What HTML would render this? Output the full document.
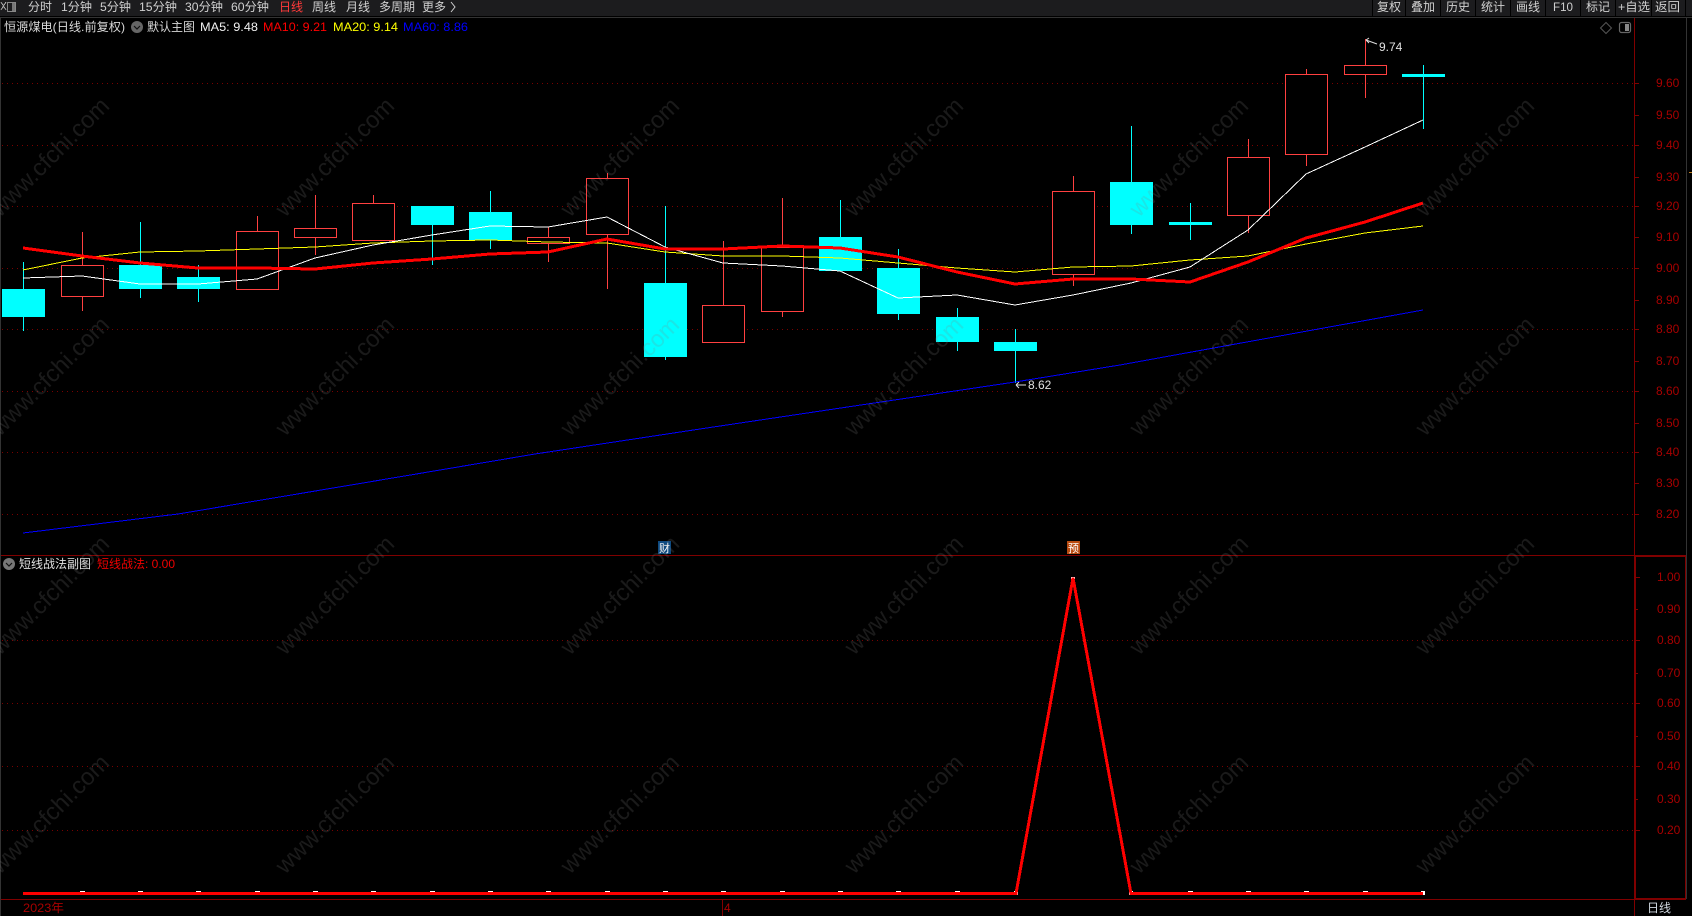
<!DOCTYPE html>
<html><head><meta charset="utf-8"><title>恒源煤电</title>
<style>
html,body{margin:0;padding:0;background:#000;width:1692px;height:916px;overflow:hidden}
svg{display:block;position:absolute;left:0;top:0}
text{font-family:"Liberation Sans","Noto Sans CJK SC",sans-serif;font-size:12px}
</style></head><body>
<svg width="1692" height="916" viewBox="0 0 1692 916" xmlns="http://www.w3.org/2000/svg">
<rect width="1692" height="916" fill="#000"/>
<!-- top bar -->
<rect x="0" y="0" width="1692" height="16" fill="#1c1c1e"/>
<rect x="0" y="16" width="1692" height="1" fill="#000"/>
<rect x="0" y="17" width="1692" height="1" fill="#333"/>
<rect x="0" y="17" width="1" height="899" fill="#333"/>
<rect x="1686" y="17" width="1" height="882" fill="#333"/>
<g fill="#000" shape-rendering="crispEdges">
<rect x="1372" y="0" width="1" height="16"/><rect x="1405" y="0" width="1" height="16"/><rect x="1440" y="0" width="1" height="16"/><rect x="1475" y="0" width="1" height="16"/><rect x="1510" y="0" width="1" height="16"/><rect x="1545" y="0" width="1" height="16"/><rect x="1580" y="0" width="1" height="16"/><rect x="1615" y="0" width="1" height="16"/><rect x="1651" y="0" width="1" height="16"/><rect x="1685" y="0" width="1" height="16"/>
</g>
<!-- logo icon -->
<g fill="none" stroke="#999" stroke-width="1" shape-rendering="crispEdges">
<rect x="7.5" y="2.5" width="8" height="9" stroke="#888"/>
<path d="M1 2 L6 10 M6 2 L1 10" stroke="#aaa"/>
</g>
<rect x="12" y="3" width="3" height="8" fill="#777"/>
<g fill="#d0d0d0">
<text x="28" y="11" textLength="24" lengthAdjust="spacingAndGlyphs">分时</text>
<text x="61" y="11" textLength="31" lengthAdjust="spacingAndGlyphs">1分钟</text>
<text x="100" y="11" textLength="31" lengthAdjust="spacingAndGlyphs">5分钟</text>
<text x="139" y="11" textLength="38" lengthAdjust="spacingAndGlyphs">15分钟</text>
<text x="185" y="11" textLength="38" lengthAdjust="spacingAndGlyphs">30分钟</text>
<text x="231" y="11" textLength="38" lengthAdjust="spacingAndGlyphs">60分钟</text>
<text x="279" y="11" textLength="24" lengthAdjust="spacingAndGlyphs" fill="#ff3a3a">日线</text>
<text x="312" y="11" textLength="24" lengthAdjust="spacingAndGlyphs">周线</text>
<text x="346" y="11" textLength="24" lengthAdjust="spacingAndGlyphs">月线</text>
<text x="379" y="11" textLength="36" lengthAdjust="spacingAndGlyphs">多周期</text>
<text x="422" y="11" textLength="24" lengthAdjust="spacingAndGlyphs">更多</text>
<text x="1377" y="11" textLength="24" lengthAdjust="spacingAndGlyphs">复权</text>
<text x="1411" y="11" textLength="24" lengthAdjust="spacingAndGlyphs">叠加</text>
<text x="1446" y="11" textLength="24" lengthAdjust="spacingAndGlyphs">历史</text>
<text x="1481" y="11" textLength="24" lengthAdjust="spacingAndGlyphs">统计</text>
<text x="1516" y="11" textLength="24" lengthAdjust="spacingAndGlyphs">画线</text>
<text x="1553" y="11" textLength="20" lengthAdjust="spacingAndGlyphs">F10</text>
<text x="1586" y="11" textLength="24" lengthAdjust="spacingAndGlyphs">标记</text>
<text x="1618" y="11" textLength="32" lengthAdjust="spacingAndGlyphs">+自选</text>
<text x="1655" y="11" textLength="25" lengthAdjust="spacingAndGlyphs">返回</text>
</g>
<path d="M451 2 L455 7 L451 12" fill="none" stroke="#d0d0d0" stroke-width="1"/>
<!-- grid upper -->
<g stroke="#7a0000" stroke-width="1" stroke-dasharray="1 4" shape-rendering="crispEdges">
<line x1="2" y1="83.5" x2="1634" y2="83.5"/>
<line x1="2" y1="145.5" x2="1634" y2="145.5"/>
<line x1="2" y1="206.5" x2="1634" y2="206.5"/>
<line x1="2" y1="268.5" x2="1634" y2="268.5"/>
<line x1="2" y1="329.5" x2="1634" y2="329.5"/>
<line x1="2" y1="391.5" x2="1634" y2="391.5"/>
<line x1="2" y1="452.5" x2="1634" y2="452.5"/>
<line x1="2" y1="514.5" x2="1634" y2="514.5"/>
<line x1="2" y1="640.5" x2="1634" y2="640.5"/>
<line x1="2" y1="703.5" x2="1634" y2="703.5"/>
<line x1="2" y1="766.5" x2="1634" y2="766.5"/>
<line x1="2" y1="830.5" x2="1634" y2="830.5"/>
</g>
<!-- axes -->
<g fill="#800000" shape-rendering="crispEdges">
<rect x="1634" y="18" width="1" height="537"/>
<rect x="1" y="555" width="1633" height="1"/>
<rect x="1634" y="555" width="52" height="2"/>
<rect x="1634" y="555" width="2" height="344"/>
<rect x="1685" y="555" width="1" height="344"/>
<rect x="1634" y="898" width="52" height="1"/>
<rect x="1" y="899" width="1685" height="1"/>
<rect x="1634" y="899" width="1" height="17"/>
<rect x="722" y="899" width="1" height="17"/>
</g>
<path d="M1635 83.5h4M1635 115.5h4M1635 145.5h4M1635 177.5h4M1635 206.5h4M1635 237.5h4M1635 268.5h4M1635 300.5h4M1635 329.5h4M1635 361.5h4M1635 391.5h4M1635 423.5h4M1635 452.5h4M1635 483.5h4M1635 514.5h4M1636 577.5h4M1636 609.5h2M1636 640.5h4M1636 673.5h2M1636 703.5h4M1636 736.5h2M1636 766.5h4M1636 799.5h2M1636 830.5h4" stroke="#800000" stroke-width="1" shape-rendering="crispEdges"/>
<rect x="1689" y="172" width="3" height="1" fill="#c08020"/>
<g fill="#a80000">
<text x="1656" y="87">9.60</text><text x="1656" y="119">9.50</text><text x="1656" y="149">9.40</text><text x="1656" y="181">9.30</text><text x="1656" y="210">9.20</text><text x="1656" y="241">9.10</text><text x="1656" y="272">9.00</text><text x="1656" y="304">8.90</text><text x="1656" y="333">8.80</text><text x="1656" y="365">8.70</text><text x="1656" y="395">8.60</text><text x="1656" y="427">8.50</text><text x="1656" y="456">8.40</text><text x="1656" y="487">8.30</text><text x="1656" y="518">8.20</text>
<text x="1657" y="581">1.00</text><text x="1657" y="613">0.90</text><text x="1657" y="644">0.80</text><text x="1657" y="677">0.70</text><text x="1657" y="707">0.60</text><text x="1657" y="740">0.50</text><text x="1657" y="770">0.40</text><text x="1657" y="803">0.30</text><text x="1657" y="834">0.20</text>
<text x="23" y="912" textLength="41" lengthAdjust="spacingAndGlyphs">2023年</text>
<text x="724" y="912">4</text>
</g>
<text x="1647" y="912" fill="#d0d8e0" textLength="24" lengthAdjust="spacingAndGlyphs">日线</text>
<!-- legend -->
<text x="4" y="31" fill="#d8d8d8" textLength="121" lengthAdjust="spacingAndGlyphs">恒源煤电(日线.前复权)</text>
<circle cx="137" cy="27" r="6" fill="#666"/>
<path d="M134 26 L137 29 L140 26" fill="none" stroke="#111" stroke-width="1.2"/>
<text x="147" y="31" fill="#d8d8d8" textLength="48" lengthAdjust="spacingAndGlyphs">默认主图</text>
<text x="200" y="31" fill="#f0f0f0" textLength="58" lengthAdjust="spacingAndGlyphs">MA5: 9.48</text>
<text x="263" y="31" fill="#ff0000" textLength="64" lengthAdjust="spacingAndGlyphs">MA10: 9.21</text>
<text x="333" y="31" fill="#ffff00" textLength="65" lengthAdjust="spacingAndGlyphs">MA20: 9.14</text>
<text x="403" y="31" fill="#0000ff" textLength="65" lengthAdjust="spacingAndGlyphs">MA60: 8.86</text>
<path d="M1606 22.5 L1611.5 28 L1606 33.5 L1600.5 28 Z" fill="none" stroke="#555" stroke-width="1"/>
<rect x="1619.5" y="22.5" width="11" height="10" rx="2" fill="none" stroke="#666" stroke-width="1.2"/>
<rect x="1625" y="24" width="4" height="7" fill="#888"/>
<circle cx="9" cy="564" r="6" fill="#777"/>
<path d="M6 563 L9 566 L12 563" fill="none" stroke="#111" stroke-width="1.2"/>
<text x="19" y="568" fill="#e0e0e0" textLength="72" lengthAdjust="spacingAndGlyphs">短线战法副图</text>
<text x="97" y="568" fill="#ee0000" textLength="78" lengthAdjust="spacingAndGlyphs">短线战法: 0.00</text>
<!-- wicks -->
<path d="M23.5 262V289M23.5 317V331M140.5 222V265M140.5 289V298M198.5 265V277M198.5 289V302M432.5 225V265M490.5 191V212M490.5 240V249M665.5 206V283M665.5 357V360M840.5 200V237M898.5 249V268M898.5 314V320M957.5 308V317M957.5 342V351M1015.5 329V342M1015.5 351V383M1131.5 126V182M1131.5 225V234M1190.5 203V222M1190.5 225V240M1423.5 65V74M1423.5 77V129" stroke="#00ffff" stroke-width="1" shape-rendering="crispEdges"/>
<path d="M82.5 232V265M82.5 296V311M257.5 216V231M315.5 195V228M315.5 237V255M373.5 195V203M548.5 227V237M548.5 243V262M607.5 173V178M607.5 234V289M723.5 241V305M782.5 198V247M782.5 311V317M1073.5 176V191M1073.5 274V286M1248.5 139V157M1248.5 215V233M1306.5 69V74M1306.5 154V166M1365.5 39V65M1365.5 74V98" stroke="#ff4040" stroke-width="1" shape-rendering="crispEdges"/>
<!-- cyan bodies -->
<g fill="#00ffff" shape-rendering="crispEdges">
<rect x="2" y="289" width="43" height="28"/><rect x="119" y="265" width="43" height="24"/><rect x="177" y="277" width="43" height="12"/><rect x="411" y="206" width="43" height="19"/><rect x="469" y="212" width="43" height="28"/><rect x="644" y="283" width="43" height="74"/><rect x="819" y="237" width="43" height="34"/><rect x="877" y="268" width="43" height="46"/><rect x="936" y="317" width="43" height="25"/><rect x="994" y="342" width="43" height="9"/><rect x="1110" y="182" width="43" height="43"/><rect x="1169" y="222" width="43" height="3"/><rect x="1402" y="74" width="43" height="3"/>
</g>
<!-- red bodies -->
<g fill="#000" stroke="#ff4040" stroke-width="1" shape-rendering="crispEdges">
<rect x="61.5" y="265.5" width="42" height="31"/><rect x="236.5" y="231.5" width="42" height="58"/><rect x="294.5" y="228.5" width="42" height="9"/><rect x="352.5" y="203.5" width="42" height="37"/><rect x="527.5" y="237.5" width="42" height="6"/><rect x="586.5" y="178.5" width="42" height="56"/><rect x="702.5" y="305.5" width="42" height="37"/><rect x="761.5" y="247.5" width="42" height="64"/><rect x="1052.5" y="191.5" width="42" height="83"/><rect x="1227.5" y="157.5" width="42" height="58"/><rect x="1285.5" y="74.5" width="42" height="80"/><rect x="1344.5" y="65.5" width="42" height="9"/>
</g>
<!-- MA lines -->
<polyline fill="none" stroke="#0000ff" stroke-width="1" shape-rendering="crispEdges" points="23,533 178,514 357,484 535,454 700,429 1015,382 1120,365 1423,310"/>
<polyline fill="none" stroke="#ffff00" stroke-width="1" shape-rendering="crispEdges" points="23,270 82,258 140,252 198,251 257,249 315,247 373,243 432,241 490,240 548,242 607,243 665,252 723,256 782,256 840,258 898,263 957,268 1015,272 1073,267 1131,266 1190,260 1248,256 1306,244 1365,233 1423,226"/>
<polyline fill="none" stroke="#ffffff" stroke-width="1" shape-rendering="crispEdges" points="23,278 82,276 140,284 198,284 257,279 315,258 373,245 432,235 490,226 548,227 607,217 665,247 723,263 782,266 840,271 898,298 957,295 1015,305 1073,295 1131,283 1190,267 1248,230 1306,174 1365,147 1423,120"/>
<polyline fill="none" stroke="#ff0000" stroke-width="3" shape-rendering="crispEdges" points="23,248 82,256 140,263 198,268 257,268 315,269 373,263 432,259 490,254 548,252 607,239 665,249 723,249 782,246 840,248 898,257 957,272 1015,284 1073,279 1131,279 1190,282 1248,262 1306,238 1365,222 1423,203"/>
<!-- extrema labels -->
<path d="M1366 40 L1377 44 M1366 40 l3 -2 M1366 40 l3 3" fill="none" stroke="#ddd" stroke-width="1"/>
<text x="1379" y="51" fill="#e0e0e0">9.74</text>
<path d="M1016 385 L1026 385 M1016 385 l3 -3 M1016 385 l3 3" fill="none" stroke="#ddd" stroke-width="1"/>
<text x="1028" y="389" fill="#e0e0e0">8.62</text>
<!-- markers -->
<rect x="658" y="541" width="13" height="13" fill="#0e4a80"/>
<text x="659" y="552" fill="#fff" style="font-size:11px">财</text>
<rect x="1067" y="541" width="13" height="13" fill="#b84a10"/>
<text x="1068" y="552" fill="#fff" style="font-size:11px">预</text>
<!-- lower indicator -->
<g fill="#fff" shape-rendering="crispEdges">
<rect x="80" y="891" width="5" height="1"/><rect x="138" y="891" width="5" height="1"/><rect x="196" y="891" width="5" height="1"/><rect x="255" y="891" width="5" height="1"/><rect x="313" y="891" width="5" height="1"/><rect x="371" y="891" width="5" height="1"/><rect x="430" y="891" width="5" height="1"/><rect x="488" y="891" width="5" height="1"/><rect x="546" y="891" width="5" height="1"/><rect x="605" y="891" width="5" height="1"/><rect x="663" y="891" width="5" height="1"/><rect x="721" y="891" width="5" height="1"/><rect x="780" y="891" width="5" height="1"/><rect x="838" y="891" width="5" height="1"/><rect x="896" y="891" width="5" height="1"/><rect x="955" y="891" width="5" height="1"/><rect x="1188" y="891" width="5" height="1"/><rect x="1246" y="891" width="5" height="1"/><rect x="1304" y="891" width="5" height="1"/><rect x="1363" y="891" width="5" height="1"/>
<rect x="1071" y="577" width="4" height="2"/>
<rect x="1014" y="891" width="4" height="4"/><rect x="1129" y="891" width="4" height="4"/><rect x="1421" y="891" width="4" height="4"/>
</g>
<polyline fill="none" stroke="#ff0000" stroke-width="3" shape-rendering="crispEdges" points="23,893.5 1016,893.5 1073,578 1131,893.5 1423,893.5"/>
<!-- watermark -->
<g fill="#808080" fill-opacity="0.2">
<text style="font-size:23.7px" transform="translate(0,218) rotate(-45)">www.cfchi.com</text>
<text style="font-size:23.7px" transform="translate(285,218) rotate(-45)">www.cfchi.com</text>
<text style="font-size:23.7px" transform="translate(570,218) rotate(-45)">www.cfchi.com</text>
<text style="font-size:23.7px" transform="translate(854,218) rotate(-45)">www.cfchi.com</text>
<text style="font-size:23.7px" transform="translate(1139,218) rotate(-45)">www.cfchi.com</text>
<text style="font-size:23.7px" transform="translate(1425,218) rotate(-45)">www.cfchi.com</text>
<text style="font-size:23.7px" transform="translate(0,437) rotate(-45)">www.cfchi.com</text>
<text style="font-size:23.7px" transform="translate(285,437) rotate(-45)">www.cfchi.com</text>
<text style="font-size:23.7px" transform="translate(570,437) rotate(-45)">www.cfchi.com</text>
<text style="font-size:23.7px" transform="translate(854,437) rotate(-45)">www.cfchi.com</text>
<text style="font-size:23.7px" transform="translate(1139,437) rotate(-45)">www.cfchi.com</text>
<text style="font-size:23.7px" transform="translate(1425,437) rotate(-45)">www.cfchi.com</text>
<text style="font-size:23.7px" transform="translate(0,656) rotate(-45)">www.cfchi.com</text>
<text style="font-size:23.7px" transform="translate(285,656) rotate(-45)">www.cfchi.com</text>
<text style="font-size:23.7px" transform="translate(570,656) rotate(-45)">www.cfchi.com</text>
<text style="font-size:23.7px" transform="translate(854,656) rotate(-45)">www.cfchi.com</text>
<text style="font-size:23.7px" transform="translate(1139,656) rotate(-45)">www.cfchi.com</text>
<text style="font-size:23.7px" transform="translate(1425,656) rotate(-45)">www.cfchi.com</text>
<text style="font-size:23.7px" transform="translate(0,875) rotate(-45)">www.cfchi.com</text>
<text style="font-size:23.7px" transform="translate(285,875) rotate(-45)">www.cfchi.com</text>
<text style="font-size:23.7px" transform="translate(570,875) rotate(-45)">www.cfchi.com</text>
<text style="font-size:23.7px" transform="translate(854,875) rotate(-45)">www.cfchi.com</text>
<text style="font-size:23.7px" transform="translate(1139,875) rotate(-45)">www.cfchi.com</text>
<text style="font-size:23.7px" transform="translate(1425,875) rotate(-45)">www.cfchi.com</text>
</g>
</svg>
</body></html>
